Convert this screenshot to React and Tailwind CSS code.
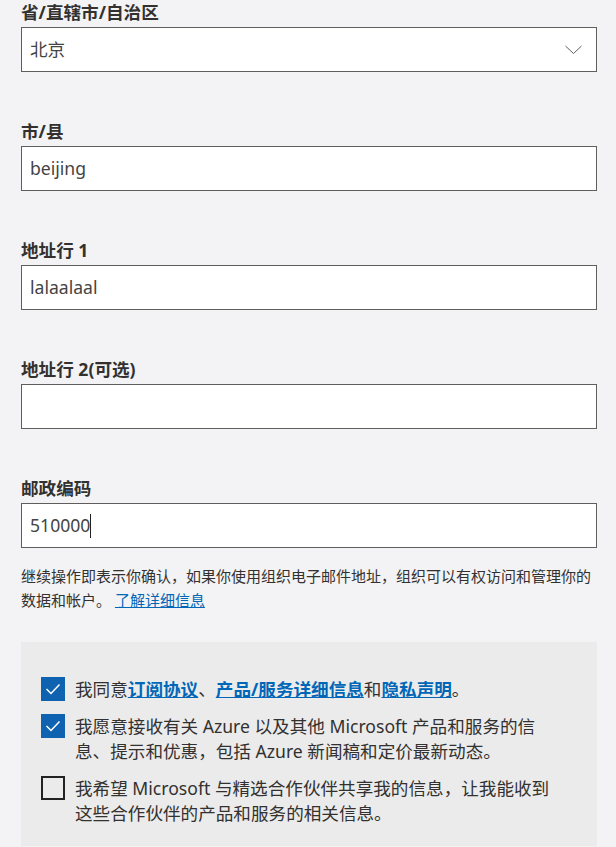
import React from "react";

const FONT = { fontFamily: '"Noto Sans", "Noto Sans CJK SC", sans-serif' };

function Label({ children }) {
  return (
    <div className="text-[17.6px] leading-[24px] font-bold text-[#323130]">{children}</div>
  );
}

function Field({ label, children, className = "" }) {
  return (
    <div className={"flex flex-col gap-[3px] " + className}>
      <Label>{label}</Label>
      {children}
    </div>
  );
}

function Box({ children }) {
  return (
    <div className="h-[45px] bg-white border border-[#605e5c] flex items-center px-[8px] text-[17.6px] text-[#444444]">
      {children}
    </div>
  );
}

function Check({ checked }) {
  if (checked) {
    return (
      <div className="w-[24px] h-[24px] shrink-0 bg-[#0f62b0] flex items-center justify-center">
        <svg width="16" height="12" viewBox="0 0 16 12">
          <polyline points="1.5,6 6,10.5 14.5,1.5" fill="none" stroke="white" strokeWidth="1.5" />
        </svg>
      </div>
    );
  }
  return <div className="w-[24px] h-[24px] shrink-0 border-2 border-[#222] bg-transparent" />;
}

export default function App() {
  return (
    <div className="min-h-[847px] bg-[#f3f3f5] pl-[21px] pr-[19px]" style={FONT}>
      <div className="flex flex-col">
        <Field label="省/直辖市/自治区">
          <div className="h-[45px] bg-white border border-[#605e5c] flex items-center justify-between px-[8px] text-[17.6px] text-[#444444]">
            <span>北京</span>
            <svg width="20" height="12" viewBox="0 0 20 12" className="mr-[4px]">
              <polyline points="1.5,2 9.5,9.5 17.5,2" fill="none" stroke="#605e5c" strokeWidth="1" />
            </svg>
          </div>
        </Field>
        <Field label="市/县" className="mt-[47px]">
          <Box>beijing</Box>
        </Field>
        <Field label="地址行 1" className="mt-[47px]">
          <Box>lalaalaal</Box>
        </Field>
        <Field label="地址行 2(可选)" className="mt-[47px]">
          <Box></Box>
        </Field>
        <Field label="邮政编码" className="mt-[47px]">
          <Box>
            <span>510000</span>
            <span className="inline-block w-[1px] h-[24px] bg-[#222]" />
          </Box>
        </Field>
        <p className="mt-[16px] text-[15px] leading-[24px] text-[#323130] whitespace-nowrap">
          继续操作即表示你确认，如果你使用组织电子邮件地址，组织可以有权访问和管理你的
          <br />
          数据和帐户。 <a className="text-[#0067b8] underline" href="#">了解详细信息</a>
        </p>
        <div className="mt-[30px] bg-[#ebebeb] pt-[35px] pb-[20px] pl-[20px] flex flex-col gap-[12px] text-[17.6px] leading-[25px] text-[#323130]">
          <div className="flex gap-[10px] items-start">
            <Check checked />
            <div className="whitespace-nowrap">
              我同意<a href="#" className="font-bold text-[#0067b8] underline">订阅协议</a>、<a href="#" className="font-bold text-[#0067b8] underline">产品/服务详细信息</a>和<a href="#" className="font-bold text-[#0067b8] underline">隐私声明</a>。
            </div>
          </div>
          <div className="flex gap-[10px] items-start">
            <Check checked />
            <div className="whitespace-nowrap">
              我愿意接收有关 Azure 以及其他 Microsoft 产品和服务的信
              <br />
              息、提示和优惠，包括 Azure 新闻稿和定价最新动态。
            </div>
          </div>
          <div className="flex gap-[10px] items-start">
            <Check />
            <div className="whitespace-nowrap">
              我希望 Microsoft 与精选合作伙伴共享我的信息，让我能收到
              <br />
              这些合作伙伴的产品和服务的相关信息。
            </div>
          </div>
        </div>
      </div>
    </div>
  );
}
